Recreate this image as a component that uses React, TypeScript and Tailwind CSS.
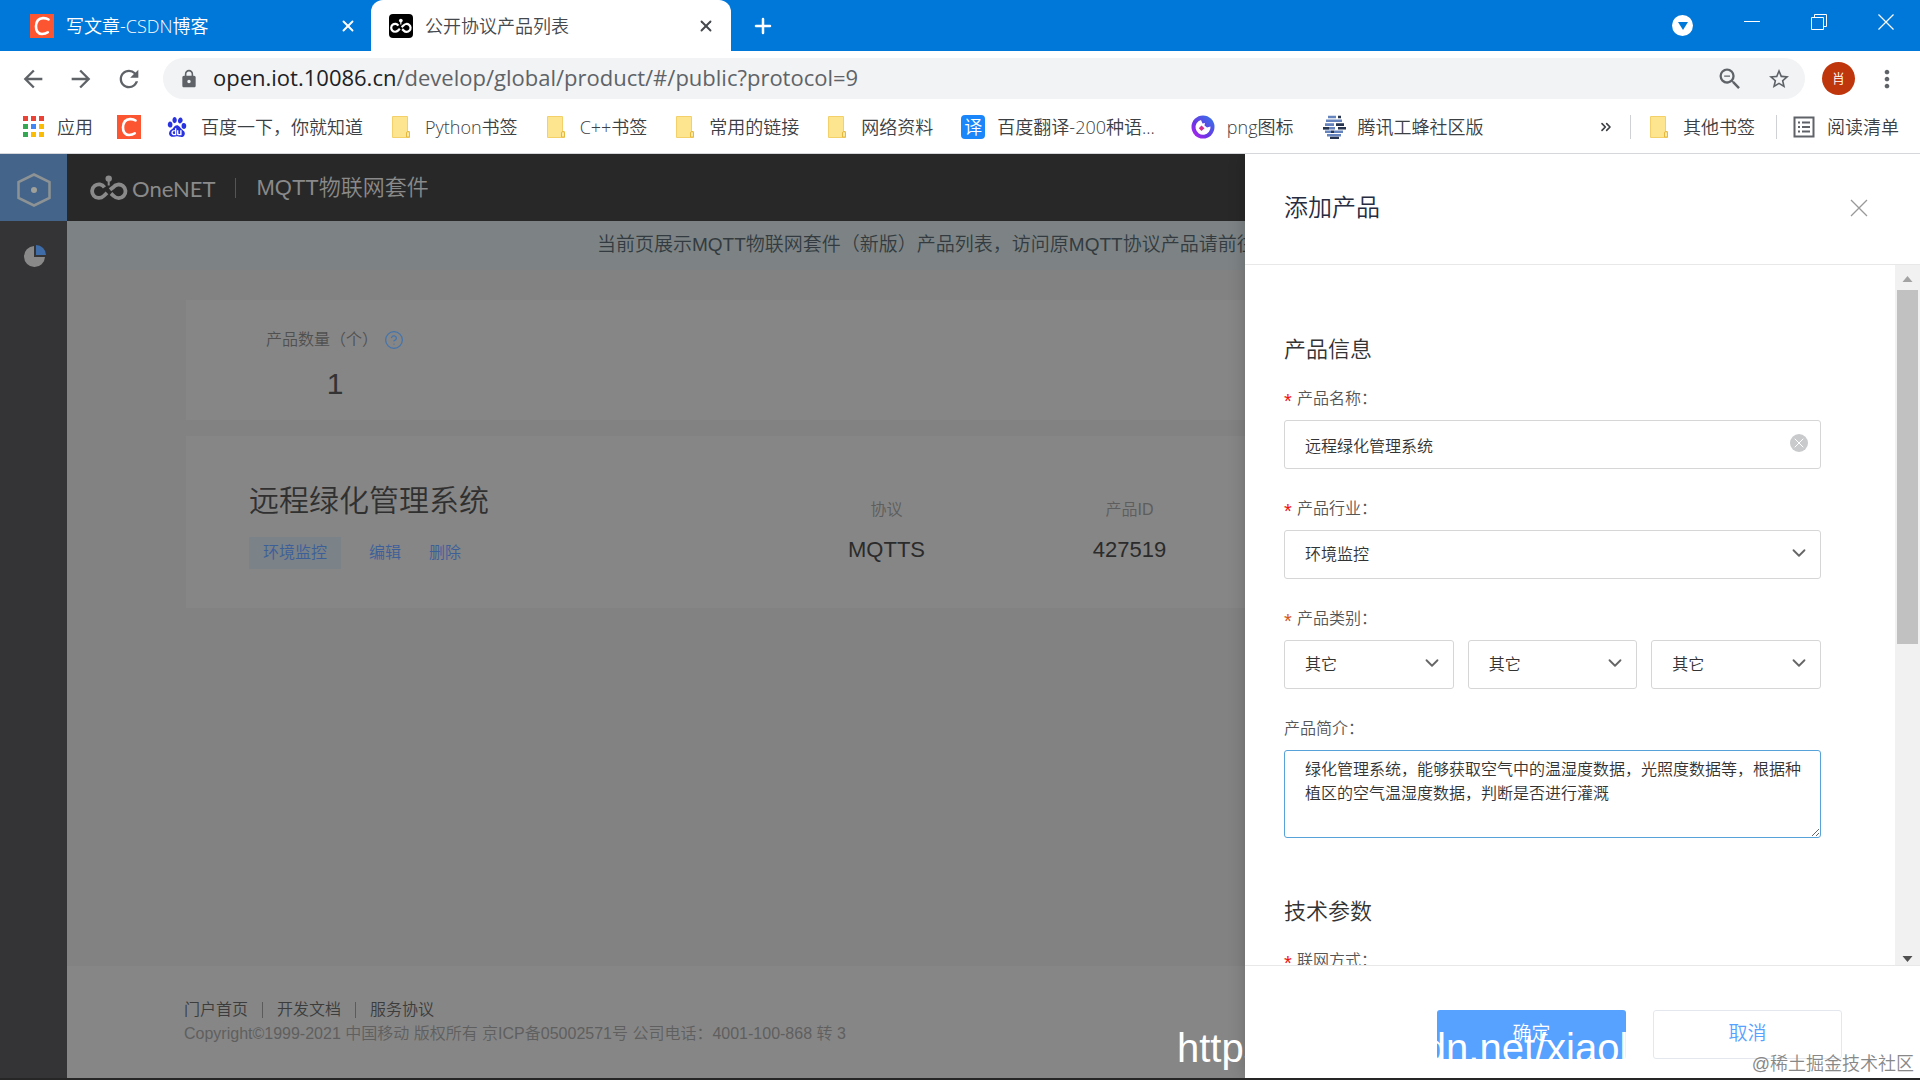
import React from 'react';
import { ChevronDown, ChevronsRight, CircleHelp, Plus, X } from 'lucide-react';
import {
  MdArrowBack, MdArrowForward, MdLock, MdMoreVert, MdRefresh, MdStarBorder, MdZoomOut
} from 'react-icons/md';
import { SiBaidu } from 'react-icons/si';

const FOLDERS = ['Python书签', 'C++书签', '常用的链接', '网络资料'];

const FOOTER_LINKS = ['门户首页', '开发文档', '服务协议'];

const APP_COLORS = [
  'bg-[#ea4335]', 'bg-[#ea4335]', 'bg-[#ea4335]',
  'bg-[#34a853]', 'bg-[#4285f4]', 'bg-[#fbbc05]',
  'bg-[#34a853]', 'bg-[#fbbc05]', 'bg-[#fbbc05]'
];

const BOX = 'w-full h-[49px] border border-[#d6d6d6] rounded-[3px] bg-white text-base text-[#333] pl-5';

const CsdnIcon = () => (
  <span className="w-6 h-6 shrink-0 bg-[#fc5531] flex items-center justify-center">
    <svg viewBox="0 0 24 24" className="w-6 h-6" fill="none" stroke="#fff" strokeWidth="2.6" strokeLinecap="round">
      <path d="M18.500 5.500C17 4.400 15 4 13 4.100 8.500 4.300 6.200 7.800 6 12.300 5.800 16.800 8.200 20 12 20 14.200 20 16.200 19.500 17.800 18.300" />
    </svg>
  </span>
);

const Rings = ({ className }: { className: string }) => (
  <svg viewBox="0 0 38 26" className={className} fill="none" stroke="currentColor" strokeWidth="3.800">
    <path d="M14.500 12.300A6.800 6.800 0 1 0 13.700 21L17 17.800" />
    <path d="M20 14.800L23.200 12.300A6.800 6.800 0 1 1 23.800 21L21 18.500" />
    <path d="M18.700 5V10.500" strokeWidth="2" />
    <circle cx="18.700" cy="3.600" r="3.200" fill="currentColor" stroke="none" />
  </svg>
);

const FolderIcon = () => (
  <svg viewBox="0 0 20 24" className="w-5 h-6 shrink-0">
    <path d="M1.500 1.500H16.500V16.500H18.500V22.500H1.500Z" fill="#fde58f" stroke="#f3d06a" />
    <path d="M15.500 22V18A1.500 1.500 0 0 1 18.500 18V22Z" fill="#fdeaa5" stroke="#e5b93f" />
  </svg>
);

const PngIcon = () => (
  <svg viewBox="0 0 24 24" className="w-6 h-6 shrink-0">
    <defs>
      <linearGradient id="png" x1="1" y1="0" x2="0" y2="1">
        <stop offset="0" stopColor="#2f7de8" />
        <stop offset="0.6" stopColor="#6a35e4" />
        <stop offset="1" stopColor="#c01ff0" />
      </linearGradient>
    </defs>
    <circle cx="12" cy="12" r="11.500" fill="url(#png)" />
    <path d="M10 5A7.500 7.500 0 1 0 19.500 11.500L16 12.500 13.500 10.500 14 8 11.500 8.500Z" fill="#fff" />
    <path d="M10.500 10.500L13.500 13.200 10.500 16 7.800 13.200Z" fill="#d02f8f" />
  </svg>
);

const BeeIcon = () => (
  <svg viewBox="0 0 24 24" className="w-6 h-6 shrink-0" strokeWidth="2.600">
    <path d="M6 2H14M4 5.800H20M3 9.600H12M1 13.200H13M3 16.800H9M12 16.800H21M5 20.200H19" stroke="#6583bd" />
    <path d="M16 2H19M14 9.600H22M1 13.200H7M16 13.200H24M9 16.800H12M8 23H17" stroke="#27344d" />
  </svg>
);

const ReadingIcon = () => (
  <svg viewBox="0 0 22 22" className="w-[22px] h-[22px] shrink-0" fill="none" stroke="#5f6368" strokeWidth="2">
    <path d="M1.500 1.500H20.500V20.500H1.500Z" />
    <path d="M5 6.500H7M9 6.500H17M5 11H7M9 11H17M5 15.500H7M9 15.500H17" />
  </svg>
);

interface LabelProps {
  id: string;
  text: string;
  star?: string;
}

const Label = ({ id, text, star = 'text-[#f01010]' }: LabelProps) => (
  <label htmlFor={id} className="flex items-center h-6 text-base text-[#555] mb-[9px]">
    {star && <span className={`w-[13px] pt-1 text-xl leading-4 font-normal ${star}`}>*</span>}
    {text}
  </label>
);

const Select = ({ id, value, label }: { id: string; value: string; label?: string }) => (
  <div className="relative flex-1">
    <select id={id} aria-label={label} className={`${BOX} appearance-none block`}>
      <option>{value}</option>
    </select>
    <ChevronDown className="absolute right-[11px] top-3 w-[22px] h-[22px] text-[#666] pointer-events-none" />
  </div>
);

const TabStrip = () => (
  <div className="h-[51px] bg-[#0078d9] flex text-white text-lg font-['Open_Sans','Noto_Sans_CJK_SC',sans-serif]">
    <div className="w-[371px] flex items-center pl-[30px] pr-[14px]">
      <CsdnIcon />
      <span className="ml-3 flex-1">写文章-CSDN博客</span>
      <button aria-label="关闭标签页"><X className="w-[18px] h-[18px]" strokeWidth={2.5} /></button>
    </div>
    <div className="w-[360px] flex items-center pl-[18px] pr-4 bg-white rounded-t-xl text-[#45484c]">
      <span className="w-6 h-6 bg-black rounded flex items-center justify-center text-white">
        <Rings className="w-[22px] h-[16px]" />
      </span>
      <span className="ml-3 flex-1">公开协议产品列表</span>
      <button aria-label="关闭标签页"><X className="w-[18px] h-[18px]" strokeWidth={2.5} /></button>
    </div>
    <button aria-label="新标签页" className="ml-5"><Plus className="w-6 h-6" strokeWidth={2.5} /></button>
    <div className="ml-auto flex items-center pr-[26px] gap-[51px]">
      <span className="w-[21px] h-[21px] rounded-full bg-white flex items-center justify-center">
        <svg viewBox="0 0 10 8" className="w-[10px] h-2"><path d="M0 0H10L5 8Z" fill="#0078d9" /></svg>
      </span>
      <button aria-label="最小化" className="pb-2"><svg className="w-4 h-4" viewBox="0 0 16 16"><path d="M0 7.500H16" stroke="#fff" /></svg></button>
      <button aria-label="还原" className="pb-2">
        <svg className="w-4 h-4" viewBox="0 0 16 16" fill="none" stroke="#fff"><path d="M.5 3.500H12.500V15.500H.5ZM3.500 3.500V.5H15.500V12.500H12.500" /></svg>
      </button>
      <button aria-label="关闭" className="pb-2">
        <svg className="w-4 h-4" viewBox="0 0 16 16" stroke="#fff" strokeWidth="1.200"><path d="M.5.5L15.500 15.500M15.500.5L.5 15.500" /></svg>
      </button>
    </div>
  </div>
);

const AddressBar = () => (
  <div className="h-[55px] flex items-center pl-[19px] pr-[19px] text-[#5f6368]">
    <div className="flex gap-5">
      <button aria-label="后退"><MdArrowBack className="w-7 h-7" /></button>
      <button aria-label="前进"><MdArrowForward className="w-7 h-7" /></button>
      <button aria-label="重新加载"><MdRefresh className="w-7 h-7" /></button>
    </div>
    <div className="ml-5 flex-1 h-[41px] rounded-full bg-[#f1f3f4] flex items-center pl-4 pr-[14px]">
      <MdLock className="w-5 h-5 mr-[14px]" />
      <span className="flex-1 pb-[2px] text-[22px] font-normal font-['Open_Sans','Noto_Sans_CJK_SC',sans-serif]">
        <span className="text-[#202124]">open.iot.10086.cn</span>/develop/global/product/#/public?protocol=9
      </span>
      <button aria-label="缩小" className="mr-[23px]"><MdZoomOut className="w-7 h-7" /></button>
      <button aria-label="收藏"><MdStarBorder className="w-6 h-6" /></button>
    </div>
    <button className="ml-[17px] w-[33px] h-[33px] rounded-full bg-[#bf360c] text-white text-[13px]">肖</button>
    <button aria-label="菜单" className="ml-[18px]"><MdMoreVert className="w-7 h-7" /></button>
  </div>
);

const Bookmarks = () => (
  <nav className="h-12 pb-[6px] border-b border-[#d5d7da] flex items-center pl-[23px] pr-[21px] text-lg text-[#3c4043] whitespace-nowrap font-['Open_Sans','Noto_Sans_CJK_SC',sans-serif]">
    <a href="#apps" className="flex items-center gap-[13px]">
      <span className="grid grid-cols-3 gap-[3px]">
        {APP_COLORS.map((color, i) => <span key={i} className={`w-[5px] h-[5px] ${color}`} />)}
      </span>
      应用
    </a>
    <a href="#csdn" aria-label="CSDN" className="ml-6"><CsdnIcon /></a>
    <a href="#baidu" className="ml-6 flex items-center gap-3"><SiBaidu className="w-5 h-5 mx-[2px] text-[#2932e1]" />百度一下，你就知道</a>
    {FOLDERS.map((name) => (
      <a key={name} href="#folder" className="ml-7 flex items-center gap-[14px]"><FolderIcon />{name}</a>
    ))}
    <a href="#fanyi" className="ml-7 flex items-center gap-3">
      <span className="w-6 h-6 rounded bg-[#1b86f9] text-white flex items-center justify-center">译</span>
      百度翻译-200种语...
    </a>
    <a href="#png" className="ml-9 flex items-center gap-3"><PngIcon />png图标</a>
    <a href="#bee" className="ml-7 flex items-center gap-3"><BeeIcon />腾讯工蜂社区版</a>
    <button aria-label="更多书签" className="ml-auto mr-4"><ChevronsRight className="w-4 h-4" strokeWidth={2.5} /></button>
    <a href="#other" className="flex items-center gap-[14px] border-l border-[#cfd1d4] pl-[18px] h-6"><FolderIcon />其他书签</a>
    <a href="#reading" className="ml-[21px] flex items-center gap-3 border-l border-[#cfd1d4] pl-4 h-6"><ReadingIcon />阅读清单</a>
  </nav>
);

const Sidebar = () => (
  <aside className="w-[67px] bg-[#343436] flex flex-col items-center">
    <div className="w-full h-[67px] pt-[5px] bg-[#446489] flex items-center justify-center">
      <svg viewBox="0 0 36 36" className="w-9 h-9" fill="none" stroke="#8d9294" strokeWidth="2.500">
        <path d="M18 2.500L33.500 10V26L18 33.500L2.500 26V10Z" />
        <circle cx="18" cy="18" r="3" fill="#a0a09a" stroke="none" />
      </svg>
    </div>
    <svg viewBox="0 0 24 24" className="w-6 h-6 mt-[23px] ml-[2px]">
      <path d="M11 2V13H22A10.500 10.500 0 1 1 11 2Z" fill="#898989" />
      <path d="M13 1A10 10 0 0 1 23 11H13Z" fill="#3e6ca8" />
    </svg>
  </aside>
);

const Stat = ({ label, value }: { label: string; value: string }) => (
  <div className="w-[243px] shrink-0 text-center">
    <div className="text-base leading-6 text-[#5d5d5d]">{label}</div>
    <div className="mt-4 text-[22px] leading-6 text-[#2b2b2b]">{value}</div>
  </div>
);

const Products = () => (
  <div className="flex-1 flex flex-col min-w-0">
    <header className="h-[67px] bg-[#282828] flex items-center pl-[23px] text-[#8a8a8a]">
      <Rings className="w-[38px] h-[26px]" />
      <span className="ml-1 pt-[2px] text-[22px] font-normal font-['Lato',sans-serif]">OneNET</span>
      <span className="ml-5 mr-5 w-px h-5 bg-[#555]" />
      <h1 className="text-[22px]">MQTT物联网套件</h1>
    </header>
    <main className="flex-1 bg-[#828282] flex flex-col">
      <div className="h-[49px] bg-[#7d8384] flex items-center pl-[530px] overflow-hidden whitespace-nowrap text-[19px] text-[#333b40]">
        当前页展示MQTT物联网套件（新版）产品列表，访问原MQTT协议产品请前往
      </div>
      <section className="ml-[119px] mt-[30px] h-[120px] bg-[#868686] pl-20 pt-7">
        <div className="flex items-center text-base leading-6 text-[#505050]">
          产品数量（个）
          <CircleHelp className="ml-[6px] w-5 h-5 text-[#4374ad]" strokeWidth={1.5} />
        </div>
        <div className="w-[138px] mt-3 text-center text-[30px] leading-10 text-[#333]">1</div>
      </section>
      <section className="ml-[119px] mt-4 h-[172px] bg-[#868686] pl-[63px] flex">
        <div className="w-[516px] shrink-0 pt-[45px]">
          <h2 className="text-[30px] leading-10 text-[#303030]">远程绿化管理系统</h2>
          <div className="mt-4 flex items-center text-base text-[#3c5f9a]">
            <span className="h-8 px-[14px] leading-8 bg-[#7b8288]">环境监控</span>
            <a href="#edit" className="ml-7">编辑</a>
            <a href="#delete" className="ml-7">删除</a>
          </div>
        </div>
        <div className="pt-[62px] flex">
          <Stat label="协议" value="MQTTS" />
          <Stat label="产品ID" value="427519" />
        </div>
      </section>
      <footer className="mt-auto h-[112px] bg-[#868686] pl-[117px] pt-9 text-base leading-6 text-[#3c3c3c]">
        <div className="flex items-center">
          {FOOTER_LINKS.map((link, i) => (
            <a key={link} href="#footer" className={i ? 'ml-[14px] pl-[14px] border-l border-[#5b5b5b] leading-4' : 'leading-4'}>{link}</a>
          ))}
        </div>
        <p className="mt-1 text-[#5f5f5f]">Copyright©1999-2021 中国移动 版权所有 京ICP备05002571号 公司电话：4001-100-868 转 3</p>
      </footer>
    </main>
  </div>
);

const Scrollbar = () => (
  <div className="w-[25px] bg-[#f1f1f1] flex flex-col items-center">
    <svg viewBox="0 0 10 6" className="w-[11px] h-[6px] mt-[11px] mb-2"><path d="M0 6H10L5 0Z" fill="#a3a3a3" /></svg>
    <div className="w-[21px] h-[354px] bg-[#c1c1c1]" />
    <svg viewBox="0 0 10 6" className="w-[11px] h-[6px] mt-auto mb-[3px]"><path d="M0 0H10L5 6Z" fill="#505050" /></svg>
  </div>
);

const AddProduct = () => (
  <section className="w-[675px] shrink-0 bg-white flex flex-col shadow-[0_0_16px_rgba(0,0,0,0.2)] z-10">
    <div className="h-[111px] pb-[2px] border-b border-[#e8e8e8] flex items-center justify-between pl-[39px] pr-[52px]">
      <h2 className="text-2xl text-[#282c40]">添加产品</h2>
      <button aria-label="关闭">
        <svg className="w-[18px] h-[18px]" viewBox="0 0 18 18" stroke="#999" strokeWidth="1.300"><path d="M1 1L17 17M17 1L1 17" /></svg>
      </button>
    </div>
    <div className="flex-1 min-h-0 flex">
      <form className="flex-1 overflow-hidden pl-[39px] pr-[74px] pt-[69px]">
        <h3 className="text-[22px] leading-8 text-[#333] mb-[21px]">产品信息</h3>
        <Label id="name" text="产品名称：" />
        <div className="relative mb-7">
          <input id="name" defaultValue="远程绿化管理系统" className={`${BOX} block`} />
          <button type="button" aria-label="清除" className="absolute right-[13px] top-[14px] w-[18px] h-[18px] rounded-full bg-[#c8cacc] text-white flex items-center justify-center">
            <X className="w-4 h-4" strokeWidth={1.5} />
          </button>
        </div>
        <Label id="industry" text="产品行业：" />
        <div className="flex mb-7"><Select id="industry" value="环境监控" /></div>
        <Label id="category" text="产品类别：" star="text-[#d4541c]" />
        <div className="flex gap-[14px] mb-7">
          <Select id="category" value="其它" />
          <Select id="category2" value="其它" label="二级类别" />
          <Select id="category3" value="其它" label="三级类别" />
        </div>
        <Label id="intro" text="产品简介：" star="" />
        <textarea
          id="intro"
          defaultValue="绿化管理系统，能够获取空气中的温湿度数据，光照度数据等，根据种植区的空气温湿度数据，判断是否进行灌溉"
          className="block w-full h-[88px] border border-[#57a3d9] rounded-[3px] pl-5 pr-2 pt-[7px] text-base leading-6 text-[#333] resize-y outline-none"
        />
        <h3 className="text-[22px] leading-8 text-[#333] mt-[58px] mb-[21px]">技术参数</h3>
        <Label id="network" text="联网方式：" />
        <div className="flex"><Select id="network" value="" /></div>
      </form>
      <Scrollbar />
    </div>
    <div className="h-[113px] border-t border-[#e8e8e8] flex items-start justify-end gap-[27px] pt-11 pr-[78px] text-[19px]">
      <button className="w-[189px] h-[49px] rounded-[3px] bg-[#57a1ff] text-white">确定</button>
      <button className="w-[189px] h-[49px] rounded-[3px] border border-[#e4e8ee] text-[#57a1ff]">取消</button>
    </div>
  </section>
);

const App = () => {
  return (
    <div className="relative h-screen flex flex-col overflow-hidden bg-white font-[350] font-['Liberation_Sans','Noto_Sans_CJK_SC',sans-serif]">
      <TabStrip />
      <AddressBar />
      <Bookmarks />
      <div className="flex-1 min-h-0 flex overflow-hidden">
        <Sidebar />
        <Products />
        <AddProduct />
      </div>
      <div className="h-[2px] bg-[#262626]" />
      <div className="absolute left-[1177px] bottom-[9px] z-20 text-[40px] leading-[46px] text-white pointer-events-none">https://blog.csdn.net/xiaol</div>
      <div className="absolute right-[6px] bottom-[2px] z-20 text-lg text-[#888] pointer-events-none">@稀土掘金技术社区</div>
    </div>
  );
};

export default App;
